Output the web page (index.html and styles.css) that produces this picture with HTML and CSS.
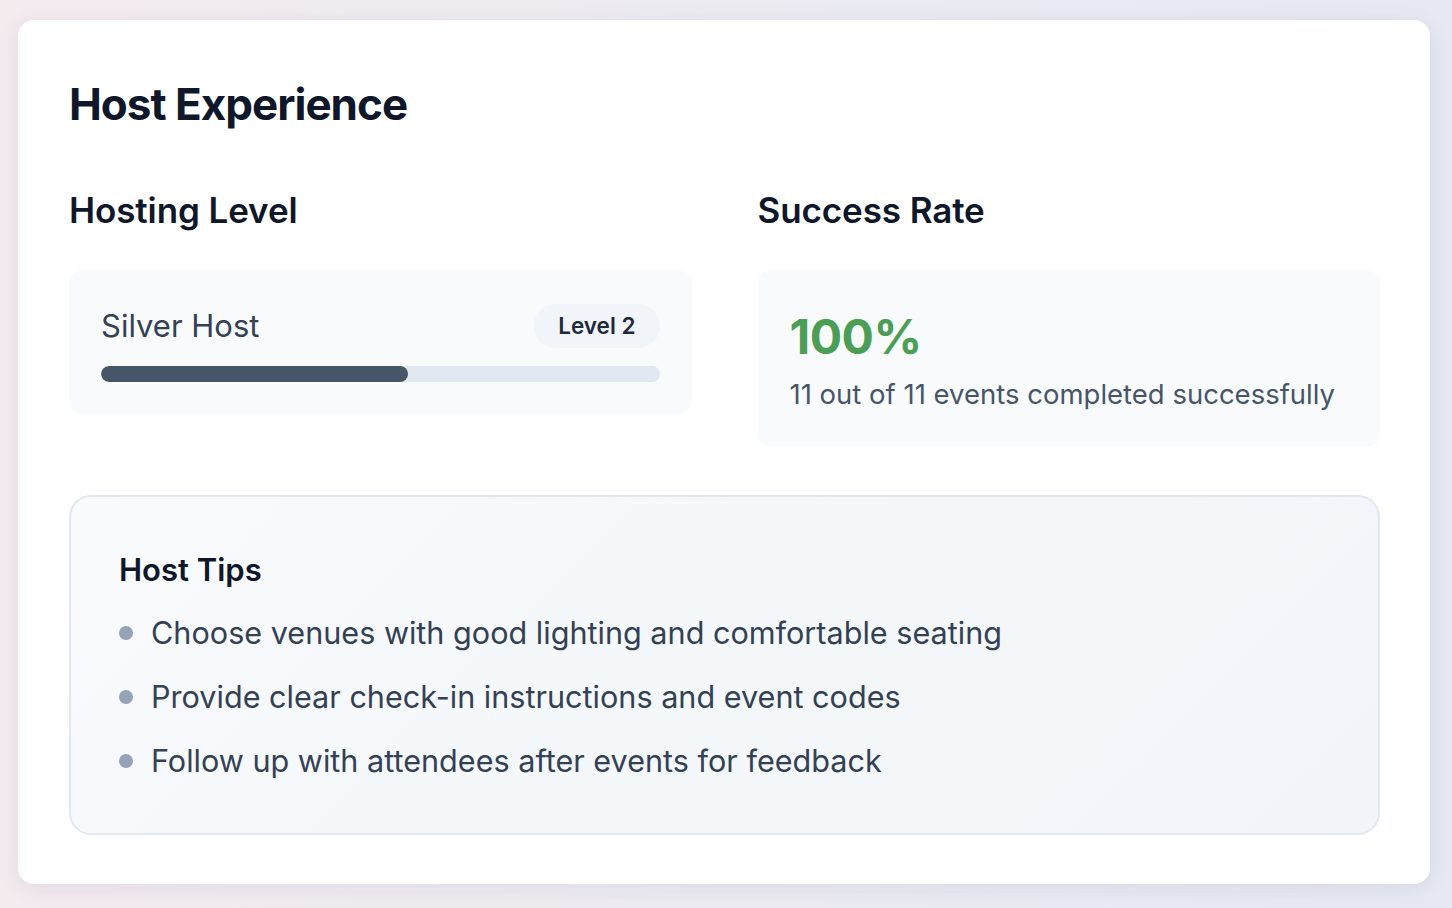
FILE: index.html
```html
<!DOCTYPE html>
<html lang="en">
<head>
<meta charset="utf-8">
<title>Host Experience</title>
<link rel="stylesheet" href="styles.css">
</head>
<body>
<main class="card">
  <h1 class="title">Host Experience</h1>
  <div class="stats">
    <section class="stat">
      <h2 class="stat-heading">Hosting Level</h2>
      <div class="panel level-panel">
        <div class="level-row">
          <span class="level-name">Silver Host</span>
          <span class="badge">Level 2</span>
        </div>
        <div class="progress"><div class="progress-fill" style="width:55%"></div></div>
      </div>
    </section>
    <section class="stat">
      <h2 class="stat-heading">Success Rate</h2>
      <div class="panel rate-panel">
        <div class="rate">100%</div>
        <div class="rate-note">11 out of 11 events completed successfully</div>
      </div>
    </section>
  </div>
  <section class="tips">
    <h3 class="tips-heading">Host Tips</h3>
    <ul class="tips-list">
      <li>Choose venues with good lighting and comfortable seating</li>
      <li>Provide clear check-in instructions and event codes</li>
      <li>Follow up with attendees after events for feedback</li>
    </ul>
  </section>
</main>
</body>
</html>
```
FILE: styles.css
```css
* { box-sizing: border-box; }
html, body { margin: 0; height: 100%; }
body {
  font-family: Inter, "Noto Sans", sans-serif;
  background: linear-gradient(90deg, #f4ebef 0%, #ecebf2 50%, #e6e8f2 100%);
  padding: 20px 22px 24px 18px;
}
.card {
  background: #fff;
  border-radius: 16px;
  box-shadow: 0 4px 20px rgba(100, 100, 140, 0.12);
  padding: 54px 50px 50px 51px;
  height: 864px;
}
.title {
  margin: 0 0 56px;
  font-size: 44px;
  font-weight: 700;
  letter-spacing: -1px;
  color: #0f172a;
  line-height: 60px;
}
.stats {
  display: grid;
  grid-template-columns: 1fr 1fr;
  column-gap: 66px;
  align-items: start;
}
.stat-heading {
  margin: 0 0 40px;
  font-size: 35px;
  font-weight: 600;
  color: #0f172a;
  line-height: 40px;
  letter-spacing: -0.1px;
}
.panel {
  background: #f8fafc;
  border-radius: 14px;
  padding: 32px;
}
.level-panel {
  padding-top: 34px;
}
.level-row {
  display: flex;
  justify-content: space-between;
  align-items: center;
  margin-bottom: 18px;
}
.level-name {
  font-size: 31px;
  color: #334155;
  line-height: 44px;
}
.badge {
  background: #f1f5f9;
  border-radius: 22px;
  font-size: 22.5px;
  font-weight: 600;
  color: #1e293b;
  line-height: 44px;
  padding: 0 24px;
}
.progress {
  height: 16px;
  background: #e2e8f0;
  border-radius: 8px;
  overflow: hidden;
}
.progress-fill {
  height: 100%;
  background: #475569;
  border-radius: 8px;
}
.rate-panel {
  padding-bottom: 33px;
}
.rate {
  font-size: 48px;
  font-weight: 700;
  color: #4a9f55;
  line-height: 62px;
  margin: 4px 0 6px;
  letter-spacing: -0.5px;
}
.rate-note {
  font-size: 27.5px;
  color: #475569;
  line-height: 40px;
}
.tips {
  margin-top: 48px;
  border: 2px solid #e2e8f0;
  border-radius: 22px;
  background: linear-gradient(135deg, #f8fafc 0%, #f1f5f9 100%);
  padding: 53px 48px 50px;
}
.tips-heading {
  margin: 0 0 21px;
  font-size: 31px;
  font-weight: 600;
  color: #0f172a;
  line-height: 40px;
}
.tips-list {
  list-style: none;
  margin: 0;
  padding: 0;
  display: flex;
  flex-direction: column;
  gap: 20px;
}
.tips-list li {
  display: flex;
  align-items: center;
  gap: 18px;
  font-size: 30.6px;
  color: #334155;
  line-height: 44px;
}
.tips-list li::before {
  content: "";
  width: 14px;
  height: 14px;
  border-radius: 50%;
  background: #94a3b8;
  flex: none;
}
```
